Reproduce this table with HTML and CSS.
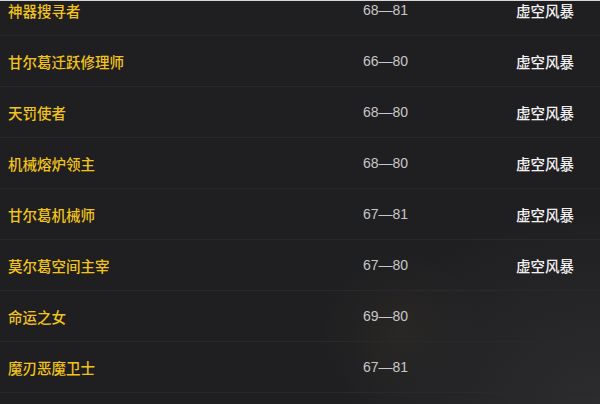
FILE: index.html
```html
<!DOCTYPE html>
<html lang="zh">
<head>
<meta charset="utf-8">
<link rel="stylesheet" href="styles.css">
</head>
<body>
<div class="frame">
  <div class="list">
    <div class="row"><span class="name">神器搜寻者</span><span class="lv">68—81</span><span class="loc">虚空风暴</span></div>
    <div class="row"><span class="name">甘尔葛迁跃修理师</span><span class="lv">66—80</span><span class="loc">虚空风暴</span></div>
    <div class="row"><span class="name">天罚使者</span><span class="lv">68—80</span><span class="loc">虚空风暴</span></div>
    <div class="row"><span class="name">机械熔炉领主</span><span class="lv">68—80</span><span class="loc">虚空风暴</span></div>
    <div class="row"><span class="name">甘尔葛机械师</span><span class="lv">67—81</span><span class="loc">虚空风暴</span></div>
    <div class="row"><span class="name">莫尔葛空间主宰</span><span class="lv">67—80</span><span class="loc">虚空风暴</span></div>
    <div class="row"><span class="name">命运之女</span><span class="lv">69—80</span><span class="loc"></span></div>
    <div class="row"><span class="name">魔刃恶魔卫士</span><span class="lv">67—81</span><span class="loc"></span></div>
  </div>
</div>
</body>
</html>
```
FILE: styles.css
```css
html, body {
  margin: 0;
  padding: 0;
  background: #1f1e21;
}
.frame {
  width: 600px;
  height: 404px;
  overflow: hidden;
  border-top: 1px solid #d8d8d8;
  box-sizing: border-box;
  background:
    radial-gradient(ellipse 260px 200px at 600px 404px, #2c2b2e 0%, rgba(44,43,46,0) 100%),
    radial-gradient(ellipse 80px 80px at 400px 330px, rgba(60,58,40,0.3) 0%, rgba(60,58,40,0) 100%),
    #1f1e21;
}
.list {
  margin-top: -16px;
}
.row {
  display: flex;
  align-items: center;
  height: 50px;
  border-bottom: 1px solid #29282c;
  font-family: "Noto Sans CJK SC", "Liberation Sans", sans-serif;
  font-size: 14.5px;
  font-weight: 500;
}
.name {
  width: 355px;
  padding-left: 8px;
  color: #f0c419;
}
.lv {
  width: 153px;
  font-family: "Liberation Sans", sans-serif;
  font-size: 14px;
  font-weight: 400;
  color: #c8c8c8;
}
.loc {
  color: #f2f2f2;
}
```
